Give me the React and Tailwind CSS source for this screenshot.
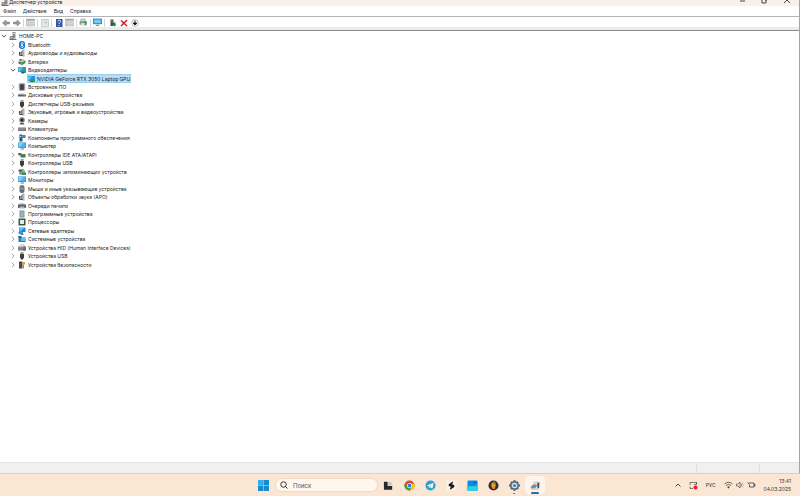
import React from "react";

const ICONS = {
  pc: (
    <>
      <path d="M7 0h6v13H7z" fill="#8b8f92" />
      <path d="M9 2h3v2H9z" fill="#f2f2f2" />
      <path d="M2 9h6v5H2z" fill="#b9bdc0" stroke="#555" />
      <path d="M1 14h14v1.500H1z" fill="#444" />
    </>
  ),
  bluetooth: (
    <>
      <rect x="2" y="0" width="12" height="16" rx="5.500" fill="#0f7bd8" />
      <path d="M5 5l6 6-3 3V2l3 3-6 6" fill="none" stroke="#fff" strokeWidth="1.400" />
    </>
  ),
  audio: (
    <>
      <path d="M2 6h3l5-5v14l-5-4H2z" fill="#8a8a8a" />
      <path d="M9 1h4v14H9z" fill="#b4b4b4" />
      <path d="M3 6v6M3 13h6" stroke="#444" strokeWidth="2" />
    </>
  ),
  battery: (
    <>
      <path d="M1 5l9-3 5 3-8 4z" fill="#b9c4b4" />
      <path d="M1 6l6 3v5l-6-3z" fill="#5a6a58" />
      <path d="M7 9l8-4v5l-8 5z" fill="#2f9b4c" />
      <path d="M3 2h4v3H3z" fill="#555" />
    </>
  ),
  display: (
    <>
      <path d="M0 2h16v10H0z" fill="#2196dd" />
      <path d="M1 3h9L4 11H1z" fill="#62c1f3" />
      <path d="M6 9h10v5H6z" fill="#2c9e5b" />
      <path d="M7 12h5v3H7z" fill="#475a52" />
    </>
  ),
  firmware: (
    <>
      <path d="M3 1h10v14H3z" fill="#4b4f53" />
      <path d="M1 3h14M1 6h14M1 9h14M1 12h14" stroke="#85898c" />
      <path d="M5 4h6v8H5z" fill="#383c40" />
    </>
  ),
  disk: (
    <>
      <path d="M1 7l2-2h10l2 2z" fill="#c1c1c1" />
      <path d="M0 7h16v4H0z" fill="#5d5d5d" />
      <path d="M11 8h3v1h-3z" fill="#91d791" />
    </>
  ),
  usb: (
    <>
      <path d="M5 0h6v5H5z" fill="#9b9b9b" />
      <path d="M4 4h8v7l-2 3H6l-2-3z" fill="#3e3e3e" />
      <path d="M8 13v3" stroke="#333" strokeWidth="2" />
    </>
  ),
  camera: (
    <>
      <circle cx="8" cy="6" r="5.500" fill="#777" />
      <circle cx="8" cy="6" r="2.500" fill="#222" />
      <path d="M5 12h6l2 3H3z" fill="#555" />
    </>
  ),
  keyboard: (
    <>
      <path d="M0 5h16v7H0z" fill="#777" />
      <path d="M1 7h14M1 9h14" stroke="#d0d0d0" strokeDasharray="1 1" />
    </>
  ),
  component: (
    <>
      <path d="M3 1h6v14H3z" fill="#39566b" />
      <path d="M9 2h6v6H9z" fill="#2089d0" />
      <path d="M4 4h3v2H4z" fill="#a8d4e9" />
    </>
  ),
  monitor: (
    <>
      <path d="M0 1h16v11H0z" fill="#1684cf" />
      <path d="M1 2h14v9H1z" fill="#4db6ef" />
      <path d="M1 2h9L3 11H1z" fill="#83d0f8" />
      <path d="M5 13h7v2H5z" fill="#777" />
    </>
  ),
  ide: (
    <>
      <path d="M1 4h5l2 2h7v3H1z" fill="#6b7773" />
      <path d="M5 8h10v5H5z" fill="#29884a" />
      <path d="M1 4h3v3H1z" fill="#444" />
    </>
  ),
  storage: (
    <>
      <path d="M2 2h9l3 4v4H2z" fill="#9da5a4" />
      <path d="M1 4h7v3H1z" fill="#4d5f56" />
      <path d="M7 9h9v5H7z" fill="#2b9950" />
      <path d="M3 9h4v4H3z" fill="#6c7876" />
    </>
  ),
  mouse: (
    <>
      <rect x="3" y="0" width="10" height="16" rx="5" fill="#656b72" />
      <path d="M8 1v7M3 8h10" stroke="#c6cdd4" />
    </>
  ),
  printer: (
    <>
      <path d="M3 2h10v4H3z" fill="#b9cedb" />
      <path d="M0 5h16v7H0z" fill="#575f65" />
      <path d="M3 9h10v4H3z" fill="#a6bccb" />
    </>
  ),
  software: (
    <>
      <path d="M3 1h10v14H3z" fill="#829196" />
      <path d="M5 3h6v10H5z" fill="#9fb7ae" />
    </>
  ),
  cpu: (
    <>
      <path d="M1 1h14v14H1z" fill="#355847" />
      <path d="M4 4h8v8H4z" fill="#e3eee8" />
    </>
  ),
  network: (
    <>
      <path d="M2 1h13v9H2z" fill="#1788d3" />
      <path d="M3 2h9L5 9H3z" fill="#66c5f5" />
      <path d="M1 10h9v4H1z" fill="#2f9fdb" />
      <path d="M5 14h6v2H5z" fill="#4a7d9c" />
    </>
  ),
  system: (
    <>
      <path d="M1 2h6l1 3h7v9H1z" fill="#287fb9" />
      <path d="M6 6h9v6H6z" fill="#5cc0ee" />
      <path d="M1 2h4v4H1z" fill="#555" />
    </>
  ),
  hid: (
    <>
      <path d="M0 5h11v8H0z" fill="#74777a" />
      <path d="M1 7h9M1 10h9" stroke="#ddd" strokeDasharray="1 1" />
      <rect x="10" y="4" width="6" height="10" rx="3" fill="#6b6f74" />
      <path d="M3 2h9v2" fill="none" stroke="#777" />
    </>
  ),
  security: (
    <>
      <path d="M2 1h7v14H2z" fill="#4b4b4b" />
      <path d="M9 2h5v5H9z" fill="#d7a62d" />
      <path d="M10 7h2v8h-2z" fill="#b48a27" />
    </>
  ),
};

const DEVICES = [
  ["bluetooth", "Bluetooth"],
  ["audio", "Аудиовходы и аудиовыходы"],
  ["battery", "Батареи"],
  ["display", "Видеоадаптеры", "NVIDIA GeForce RTX 3050 Laptop GPU"],
  ["firmware", "Встроенное ПО"],
  ["disk", "Дисковые устройства"],
  ["usb", "Диспетчеры USB-разъема"],
  ["audio", "Звуковые, игровые и видеоустройства"],
  ["camera", "Камеры"],
  ["keyboard", "Клавиатуры"],
  ["component", "Компоненты программного обеспечения"],
  ["monitor", "Компьютер"],
  ["ide", "Контроллеры IDE ATA/ATAPI"],
  ["usb", "Контроллеры USB"],
  ["storage", "Контроллеры запоминающих устройств"],
  ["monitor", "Мониторы"],
  ["mouse", "Мыши и иные указывающие устройства"],
  ["audio", "Объекты обработки звука (APO)"],
  ["printer", "Очереди печати"],
  ["software", "Программные устройства"],
  ["cpu", "Процессоры"],
  ["network", "Сетевые адаптеры"],
  ["system", "Системные устройства"],
  ["hid", "Устройства HID (Human Interface Devices)"],
  ["usb", "Устройства USB"],
  ["security", "Устройства безопасности"],
];

function Icon({ name }) {
  return (
    <svg viewBox="0 0 16 16" className="size-2 shrink-0" aria-hidden="true">
      {ICONS[name]}
    </svg>
  );
}

function Chevron({ open }) {
  return (
    <svg viewBox="0 0 8 8" className="size-1.5 shrink-0" fill="none" stroke={open ? "#444" : "#999"} strokeWidth="1.200" aria-hidden="true">
      <path d={open ? "M1 2.500l3 3 3-3" : "M2.500 1l3 3-3 3"} />
    </svg>
  );
}

function TreeButton({ open, icon, label }) {
  return (
    <button type="button" aria-expanded={open} className="flex h-full items-center whitespace-nowrap">
      <Chevron open={open} />
      <span className="ml-0.5 flex"><Icon name={icon} /></span>
      <span className="ml-0.5">{label}</span>
    </button>
  );
}

function Tree() {
  return (
    <ul className="grid h-[237px] auto-rows-fr pl-px">
      <li className="flex min-h-0 items-center"><TreeButton open icon="pc" label="HOME-PC" /></li>
      {DEVICES.map(([icon, label, child]) => (
        <React.Fragment key={label}>
          <li className="flex min-h-0 items-center pl-[9px]">
            <TreeButton open={Boolean(child)} icon={icon} label={label} />
          </li>
          {child && (
            <li className="flex min-h-0 items-center pl-[26px]">
              <button type="button" className="flex h-full items-center gap-0.5 bg-[#b7ddf6] pr-px whitespace-nowrap outline outline-[#9dcdec] -outline-offset-1">
                <Icon name={icon} />
                {child}
              </button>
            </li>
          )}
        </React.Fragment>
      ))}
    </ul>
  );
}

function Tool({ label, wide, children }) {
  return (
    <button type="button" aria-label={label} className="flex w-[11px] shrink-0 justify-center">
      <svg viewBox="0 0 16 16" className={wide ? "size-[9px]" : "size-2"} aria-hidden="true">{children}</svg>
    </button>
  );
}

const Divider = () => <span className="mx-px h-2 w-px shrink-0 bg-[#d5d5d5]" />;

const PANEL = (
  <>
    <path d="M0 2h16v12H0z" fill="#e4e7e8" stroke="#9b9fa1" />
    <path d="M1 2h14v3H1z" fill="#a5abad" />
    <path d="M5 5v9M7 8h7M7 11h7M1 8h3M1 11h3" stroke="#9ca8aa" />
  </>
);

function Toolbar() {
  return (
    <div className="flex h-[11px] items-center" role="toolbar" aria-label="Панель инструментов">
      <Tool label="Назад"><path d="M1 8l7-6v4h7v4H8v4z" fill="#969a9c" stroke="#6f7375" /></Tool>
      <Tool label="Вперед"><path d="M15 8L8 2v4H1v4h7v4z" fill="#969a9c" stroke="#6f7375" /></Tool>
      <Divider />
      <Tool label="Дерево консоли" wide>{PANEL}</Tool>
      <Divider />
      <Tool label="Свойства">
        <path d="M1 1h14v14H1z" fill="#eef0f1" stroke="#9ba2a6" />
        <path d="M3 4h2M7 4h6M3 7h2M7 7h6M3 10h2M7 10h6" stroke="#8fa4ad" />
      </Tool>
      <Divider />
      <Tool label="Справка">
        <path d="M2 0h13v16H2z" fill="#3458a4" />
        <path d="M6 5c0-4 6-3 5 0 0 2-3 2-3 5M8 12v2" fill="none" stroke="#fff" strokeWidth="1.700" />
      </Tool>
      <Tool label="Панель действий" wide>{PANEL}</Tool>
      <Divider />
      <Tool label="Обновить конфигурацию" wide>
        <path d="M3 2h8v4H3z" fill="#d6dcde" stroke="#8a9292" />
        <path d="M1 6h13v6H1z" fill="#899393" />
        <path d="M4 9h9v5H4z" fill="#d8e5df" />
        <path d="M11 5l4 4h-2v4h-3V9H8z" fill="#38a353" />
      </Tool>
      <Divider />
      <Tool label="Монитор" wide>
        <path d="M0 1h16v10H0z" fill="#2793d8" />
        <path d="M2 3h12v6H2z" fill="#7bc9f3" />
        <path d="M5 12h6v2H5z" fill="#628aa3" />
      </Tool>
      <Divider />
      <span className="w-px" />
      <Tool label="Включить устройство">
        <path d="M3 1h6v13H3z" fill="#424a47" />
        <path d="M5 3h2v4H5z" fill="#8a9891" />
        <path d="M8 7h5v4h2l-4 4-5-4h2z" fill="#268344" />
      </Tool>
      <Tool label="Удалить устройство"><path d="M2 3l12 11M14 2L2 14" stroke="#d71920" strokeWidth="3" /></Tool>
      <Tool label="Отключить устройство">
        <circle cx="8" cy="8" r="6.500" fill="#fff" stroke="#777" />
        <path d="M8 3v6M4.500 8L8 12l3.500-4z" stroke="#222" strokeWidth="2" />
      </Tool>
    </div>
  );
}

function WindowsLogo() {
  return <svg viewBox="0 0 22 22" className="size-[11px]" aria-hidden="true"><path d="M0 0h10.500v10.500H0zM11.500 0H22v10.500H11.500zM0 11.500h10.500V22H0zM11.500 11.500H22V22H11.500z" fill="#168bd2" /><path d="M0 0h10.500v10.500H0z" fill="#35b0e9" /></svg>;
}

const APPS = [
  ["Представление задач", <><path d="M6 2h16v17H6z" fill="#e9e5e1" /><path d="M2 4h8v9h10v8H2z" fill="#282828" /><path d="M11 5h8v7h-8z" fill="#c8c5c2" /></>],
  ["Chrome", <><circle cx="12" cy="12" r="11" fill="#e34133" /><path d="M2.500 6.500A11 11 0 0 0 12 23l5-8.500H7z" fill="#2da94f" /><path d="M22.500 8H12l5 7-5 8A11 11 0 0 0 22.500 8z" fill="#fdc413" /><circle cx="12" cy="12" r="5.500" fill="#fff" /><circle cx="12" cy="12" r="4.200" fill="#327ddd" /></>],
  ["Telegram", <><circle cx="12" cy="12" r="11" fill="#279fd9" /><path d="M4 12l15-6-3 13-5-4-2 3-1-5z" fill="#fff" /><path d="M9 14l7-6-5 7-2 3z" fill="#a9d4ec" /></>],
  ["Steelseries", <><path d="M1 1h22v22H1z" fill="#fbf1e7" /><path d="M15 3L6 9v4l6 2-3 2v4l9-6v-4l-6-2 3-2z" fill="#161616" /></>],
  ["Студия", <><rect x="1" y="1" width="22" height="22" rx="2" fill="#078bea" /><path d="M1 13h22v10H1z" fill="#18c6df" /><path d="M1 17c7-6 10 2 22-6v12H1z" fill="#27d4e5" /><path d="M14 4h6v3h-6z" fill="#1252a7" /></>],
  ["FL Studio", <><circle cx="12" cy="12" r="11" fill="#36302c" /><path d="M12 5c6 0 6 8 3 13-2 3-5 2-6-1-3-5-3-12 3-12z" fill="#ec8925" /><path d="M11 7l2-5 4 2-3 4z" fill="#55913c" /><path d="M9 10l6 5M14 9l-5 7" stroke="#f9c44a" /></>],
  ["Параметры", <><circle cx="12" cy="12" r="8" fill="none" stroke="#5b6875" strokeWidth="4" /><path d="M12 0v5M12 19v5M0 12h5M19 12h5M4 4l4 4M16 16l4 4M20 4l-4 4M8 16l-4 4" stroke="#5b6875" strokeWidth="4" /><circle cx="12" cy="12" r="6" fill="#d7e8f4" /><circle cx="12" cy="12" r="3.500" fill="#3984bd" /></>],
  ["Диспетчер устройств", <><path d="M8 4h13v10H8z" fill="#b9bfc3" /><path d="M10 6h6v3h-6z" fill="#f2f2f2" /><path d="M16 6h4v12h-4z" fill="#525659" /><path d="M2 14l5-4h7v5l-4 4H2z" fill="#858c91" /><path d="M3 18h17v3H3z" fill="#c4c9cc" /></>],
];

function Taskbar() {
  return (
    <footer className="grid h-[23px] grid-cols-[1fr_auto_1fr] items-center border-t border-[#d9cfc6] bg-[#fbe6d3] pl-1">
      <span />
      <nav className="flex items-center" aria-label="Панель задач">
        <button type="button" aria-label="Пуск" className="mr-1.5"><WindowsLogo /></button>
        <label className="flex h-[14px] w-[103px] items-center gap-[5px] rounded-full border border-[#ecdccd] bg-[#fff6ee] pl-1">
          <svg viewBox="0 0 16 16" className="size-2 shrink-0" fill="none" stroke="#333" strokeWidth="2" aria-hidden="true"><circle cx="7" cy="7" r="5.500" /><path d="M11 11l4 4" /></svg>
          <input type="search" aria-label="Поиск" placeholder="Поиск" className="w-full min-w-0 bg-transparent text-[6px] leading-[9px] outline-none placeholder:text-[#555]" />
        </label>
        {APPS.map(([label, art], i) => (
          <button
            key={label}
            type="button"
            aria-label={label}
            className={`relative mr-px flex h-[18px] w-5 items-center justify-center rounded-sm ${i === 7 ? "bg-[#fdf4ec]" : ""}`}
          >
            <svg viewBox="0 0 24 24" className="size-[11px]" aria-hidden="true">{art}</svg>
            {i === 6 && <span className="absolute bottom-0 h-px w-0.5 bg-[#86796e]" />}
            {i === 7 && <span className="absolute bottom-0 h-0.5 w-2 rounded-full bg-[#1777bd]" />}
          </button>
        ))}
      </nav>
      <div className="flex items-center justify-end pr-[9px] leading-[8px] text-[#333]">
        <button type="button" aria-label="Скрытые значки" className="mr-2">
          <svg viewBox="0 0 12 12" className="size-1.5" fill="none" stroke="#333" strokeWidth="1.800" aria-hidden="true"><path d="M1 9l5-5 5 5" /></svg>
        </button>
        <button type="button" aria-label="Обновление" className="mr-2">
          <svg viewBox="0 0 18 18" className="size-[9px]" fill="none" stroke="#555" strokeWidth="1.500" aria-hidden="true"><path d="M2 8V3h13v4M15 2v5h-5M2 11v4h6" /><circle cx="13" cy="13" r="4" fill="#e0242d" stroke="none" /></svg>
        </button>
        <button type="button" className="mr-2">РУС</button>
        <button type="button" aria-label="Сеть, звук и батарея" className="mr-2 flex items-center gap-[3px]">
          <svg viewBox="0 0 18 16" className="h-2 w-[9px]" fill="none" stroke="#444" strokeWidth="1.600" aria-hidden="true"><path d="M1 6q8-7 16 0M4 9q5-5 10 0M7 12q2-2 4 0" /><circle cx="9" cy="13" r="1" fill="#444" /></svg>
          <svg viewBox="0 0 16 16" className="size-2" fill="none" stroke="#444" strokeWidth="1.300" aria-hidden="true"><path d="M1 6h3l4-4v12l-4-4H1z" /><path d="M10 5q2 3 0 6" /><path d="M13 3q3 5 0 10" stroke="#aaa" /></svg>
          <svg viewBox="0 0 18 16" className="h-2 w-[9px]" fill="none" stroke="#333" strokeWidth="1.500" aria-hidden="true"><path d="M3 4h11v8H5V8M14 7h2v3h-2M1 3l4 4" /></svg>
        </button>
        <time dateTime="2025-03-04T13:41" className="text-right">13:41<br />04.03.2025</time>
      </div>
    </footer>
  );
}

export default function App() {
  return (
    <div className="flex h-screen flex-col overflow-hidden bg-white font-[Inter,'Noto_Sans',sans-serif] text-[5px] leading-[8px] text-[#222]">
      <main className="flex min-h-0 flex-1 flex-col border-r border-[#a5a5a5]">
        <header className="flex h-1.5 shrink-0 items-start justify-between overflow-hidden bg-[#faf0e8]">
          <h1 className="flex h-1 items-center pl-px leading-[4px]"><Icon name="pc" />Диспетчер устройств</h1>
          <div className="flex items-center gap-[14px] pr-2 text-[#444]">
            <button type="button" aria-label="Свернуть"><svg viewBox="0 0 8 8" className="size-2" stroke="currentColor" aria-hidden="true"><path d="M1 1h5" /></svg></button>
            <button type="button" aria-label="Развернуть"><svg viewBox="0 0 8 8" className="size-2" fill="none" stroke="currentColor" aria-hidden="true"><path d="M1 -1h4v4H1zM4 0h2v-2" /></svg></button>
            <button type="button" aria-label="Закрыть"><svg viewBox="0 0 8 8" className="size-2" stroke="currentColor" aria-hidden="true"><path d="M1 -3l6 6M7 -3L1 3" /></svg></button>
          </div>
        </header>
        <nav className="flex h-[11px] shrink-0 items-center gap-[7px] border-b border-[#b5b5b5] pl-[3px]" aria-label="Меню">
          <button type="button">Файл</button>
          <button type="button">Действие</button>
          <button type="button">Вид</button>
          <button type="button">Справка</button>
        </nav>
        <div className="h-[14px] shrink-0 border-b border-[#8c8c8c] bg-gradient-to-b from-white from-75% to-[#ececec] to-75%">
          <Toolbar />
        </div>
        <section className="min-h-0 flex-1 overflow-hidden pt-px" aria-label="Устройства"><Tree /></section>
        <div className="flex h-[11px] shrink-0 justify-end border-t border-[#e4e4e4] bg-[#f0f0f0]">
          <span className="w-[63px] border-l border-[#dedede]" />
          <span className="w-10 border-l border-[#dedede]" />
        </div>
      </main>
      <Taskbar />
    </div>
  );
}
